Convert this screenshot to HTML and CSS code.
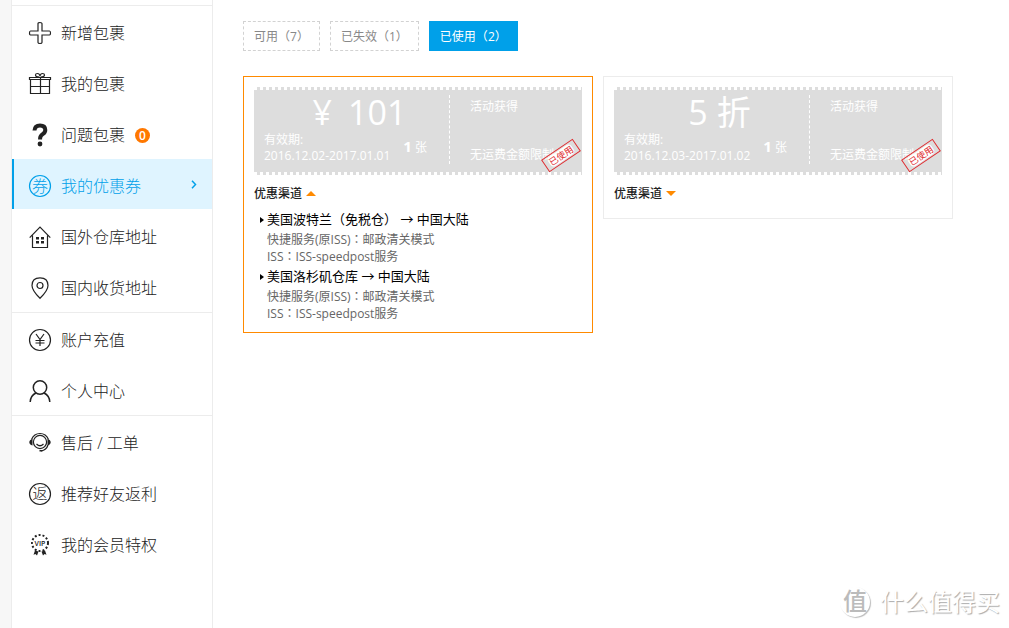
FILE: index.html
```html
<!DOCTYPE html>
<html lang="zh-CN">
<head>
<meta charset="utf-8">
<title>我的优惠券</title>
<link rel="stylesheet" href="styles.css">
</head>
<body>
<div class="page">
  <nav class="sidebar">
    <div class="group">
      <a class="item" href="#"><svg class="icon" viewBox="0 0 22 22"><path d="M9 1.500q0-1 2-1t2 1V9h7.500q1 0 1 2t-1 2H13v7.500q0 1-2 1t-2-1V13H1.500q-1 0-1-2t1-2H9z"/></svg><span>新增包裹</span></a>
      <a class="item" href="#"><svg class="icon" viewBox="0 0 22 22"><path d="M.5 4.500h21v2H.5zM1.500 6.500v14h19v-14M11.500 4.500v16M1.500 13.500h19M10.500 4q-4 0-4-2 0-1.500 2-1.500 2 0 2.500 2.500.5-2.500 2.500-2.500t2 1.500q0 2-4 2"/></svg><span>我的包裹</span></a>
      <a class="item" href="#"><svg class="icon" viewBox="0 0 22 22"><path class="thick" d="M5.500 6.500Q5.800 1.500 11 1.500t5.300 4.500q0 2.500-2.600 4.200T11.100 14.500v1"/><circle class="solid" cx="11" cy="20" r="2.400"/></svg><span>问题包裹</span><span class="badge">0</span></a>
      <a class="item active" href="#"><svg class="icon" viewBox="0 0 22 22"><circle cx="11" cy="11" r="10.500"/><text x="11" y="17" font-size="16">券</text></svg><span>我的优惠券</span><svg class="chevron" viewBox="0 0 6 9"><path d="M1 .8l3.500 3.700L1 8.200"/></svg></a>
      <a class="item" href="#"><svg class="icon" viewBox="0 0 22 22"><path d="M.7 11.700L11 1.200l10.300 10.500M3.500 9.500v12h15v-12"/><path class="solid" d="M7 11h3v2.500H7zM12 11h3v2.500h-3zM7 15h3v2.500H7zM12 15h3v2.500h-3z"/></svg><span>国外仓库地址</span></a>
      <a class="item" href="#"><svg class="icon" viewBox="0 0 22 22"><path d="M11 21.300Q3 13.500 3 8.500 3 .8 11 .8t8 7.700q0 5-8 12.800z"/><circle cx="11" cy="8.500" r="3"/></svg><span>国内收货地址</span></a>
    </div>
    <div class="group">
      <a class="item" href="#"><svg class="icon" viewBox="0 0 22 22"><circle cx="11" cy="11" r="10.500"/><path d="M7 5l4 5.500L15 5M11 10.500V17M6.500 11.500h9M6.500 14h9"/></svg><span>账户充值</span></a>
      <a class="item" href="#"><svg class="icon" viewBox="0 0 22 22"><g class="medium"><circle cx="11" cy="7.500" r="6.700"/><path d="M7 13Q1.500 15.500 1.200 22M15 13q5.500 2.500 5.800 9"/></g></svg><span>个人中心</span></a>
    </div>
    <div class="group">
      <a class="item" href="#"><svg class="icon" viewBox="0 0 22 22"><circle cx="11" cy="10" r="6.600"/><path d="M2.500 7.500Q5 1.500 11 1.500t8.500 6M19 13q-1.500 5-7 6M7.500 12q3.500 3.500 7 0"/><path class="solid" d="M3.500 7v6.500Q.3 12.500.3 10.200T3.500 7zM18.500 7v6.500q3.200-1 3.200-3.300T18.500 7zM10.500 18h3v1.500h-3z"/></svg><span>售后 / 工单</span></a>
      <a class="item" href="#"><svg class="icon" viewBox="0 0 22 22"><circle cx="11" cy="11" r="10.500"/><text x="11" y="16" font-size="15">返</text></svg><span>推荐好友返利</span></a>
      <a class="item" href="#"><svg class="icon" viewBox="0 0 22 22"><circle class="dotted" cx="11" cy="9" r="8"/><text class="vip" x="11" y="12" font-size="7">VIP</text><path class="solid" d="M6 16.500l3.500 1-1.500 4-1.500-1.500-2 .8zM16 16.500l-3.500 1 1.500 4 1.500-1.500 2 .8z"/></svg><span>我的会员特权</span></a>
    </div>
  </nav>

  <main class="content">
    <div class="tabs">
      <button class="tab" type="button">可用<span class="wide" lang="zh-TW">（</span>7<span class="wide" lang="zh-TW">）</span></button>
      <button class="tab" type="button">已失效<span class="wide" lang="zh-TW">（</span>1<span class="wide" lang="zh-TW">）</span></button>
      <button class="tab selected" type="button">已使用<span class="wide" lang="zh-TW">（</span>2<span class="wide" lang="zh-TW">）</span></button>
    </div>
    <div class="cards">
      <section class="card open">
        <div class="coupon">
          <div class="value">
            <div class="amount"><span class="yen">¥</span>101</div>
            <div class="terms">
              <div class="dates">有效期:<br>2016.12.02-2017.01.01</div>
              <div class="count"><b>1</b> 张</div>
            </div>
          </div>
          <div class="source"><span>活动获得</span><span>无运费金额限制</span></div>
          <span class="stamp"><span>已使用</span></span>
        </div>
        <button class="toggle" type="button" aria-expanded="true">优惠渠道</button>
        <dl class="routes">
          <dt>美国波特兰<span class="wide" lang="zh-TW">（</span>免税仓<span class="wide" lang="zh-TW">）</span> → 中国大陆</dt>
          <dd>快捷服务(原ISS)<span class="wide" lang="zh-TW">：</span>邮政清关模式</dd>
          <dd>ISS<span class="wide" lang="zh-TW">：</span>ISS-speedpost服务</dd>
          <dt>美国洛杉矶仓库 → 中国大陆</dt>
          <dd>快捷服务(原ISS)<span class="wide" lang="zh-TW">：</span>邮政清关模式</dd>
          <dd>ISS<span class="wide" lang="zh-TW">：</span>ISS-speedpost服务</dd>
        </dl>
      </section>
      <section class="card">
        <div class="coupon">
          <div class="value">
            <div class="amount">5 折</div>
            <div class="terms">
              <div class="dates">有效期:<br>2016.12.03-2017.01.02</div>
              <div class="count"><b>1</b> 张</div>
            </div>
          </div>
          <div class="source"><span>活动获得</span><span>无运费金额限制</span></div>
          <span class="stamp"><span>已使用</span></span>
        </div>
        <button class="toggle" type="button" aria-expanded="false">优惠渠道</button>
      </section>
    </div>
  </main>
  <div class="watermark"><span class="seal">值</span><span>什么值得买</span></div>
</div>
</body>
</html>
```
FILE: styles.css
```css
* {
  box-sizing: border-box;
}

body {
  margin: 0;
  background: #fff;
  color: #333;
  font: 12px/17px "Open Sans", "Noto Sans CJK SC", sans-serif;
}

button {
  font: inherit;
  cursor: pointer;
}

/* Full-width punctuation centred in its cell */
.wide {
  font-family: "Noto Sans CJK TC", sans-serif;
  line-height: 1;
}

.page {
  position: relative;
  display: flex;
  min-height: 100vh;
  border-left: 11px solid #f7f7f7;
}

/* Sidebar */
.sidebar {
  flex: none;
  width: 202px;
  padding-top: 5px;
  border: solid #ececec;
  border-width: 0 1px;
}

.group {
  border-top: 1px solid #ececec;
}

.item {
  display: flex;
  align-items: center;
  height: 50px;
  margin-bottom: 1px;
  padding: 4px 15px 0 17px;
  color: #222;
  font-size: 16px;
  font-weight: 300;
  line-height: 24px;
  text-decoration: none;
}

.item.active {
  padding-left: 15px;
  border-left: 2px solid #00a0e9;
  background: #dff4ff;
  color: #00a0e9;
}

.icon {
  flex: none;
  width: 22px;
  height: 22px;
  margin-right: 10px;
  overflow: visible;
  fill: none;
  stroke: currentColor;
  stroke-width: 1.2;
}

.icon text {
  fill: currentColor;
  stroke: none;
  text-anchor: middle;
}

.icon .vip {
  font-weight: 600;
}

.icon .thick {
  stroke-width: 4;
}

.icon .medium {
  stroke-width: 1.5;
}

.icon .solid {
  fill: currentColor;
  stroke: none;
}

.icon .dotted {
  stroke-width: 2;
  stroke-dasharray: 2 2;
}

.badge {
  width: 15px;
  height: 15px;
  margin-left: 10px;
  border-radius: 50%;
  background: #ff7800;
  color: #fff;
  font-size: 12px;
  font-weight: 600;
  line-height: 15px;
  text-align: center;
}

.chevron {
  width: 6px;
  height: 9px;
  margin: 0 0 4px auto;
  fill: none;
  stroke: currentColor;
  stroke-width: 1.5;
}

/* Main column */
.content {
  flex: 1;
  padding: 21px 30px;
}

.tabs,
.cards {
  display: flex;
  flex-wrap: wrap;
  align-items: flex-start;
  gap: 10px;
}

.tab {
  height: 30px;
  padding: 0 10px;
  border: 1px dashed #d2d2d2;
  background: #fff;
  color: #888;
}

.tab.selected {
  border: 1px solid #00a0e9;
  background: #00a0e9;
  color: #fff;
}

.cards {
  margin-top: 25px;
}

.card {
  width: 350px;
  padding: 10px 10px 16px;
  border: 1px solid #ececec;
}

.card.open {
  padding-bottom: 10px;
  border-color: #ff8a00;
}

/* Coupon ticket with perforated edges */
.coupon {
  position: relative;
  display: flex;
  padding: 8px 0 11px;
  background:
    repeating-linear-gradient(90deg, #fff 0 3px, #ddd 3px 6px) top / 100% 3px no-repeat,
    repeating-linear-gradient(90deg, #fff 0 3px, #ddd 3px 6px) bottom / 100% 3px no-repeat,
    #ddd;
  color: #fff;
}

.value {
  width: 196px;
  padding-left: 10px;
  border-right: 1px dashed #fff;
}

.amount {
  padding-left: 6px;
  font-size: 34px;
  line-height: 35px;
  text-align: center;
}

.yen {
  margin-right: 16px;
}

.terms {
  display: flex;
  align-items: center;
  gap: 13px;
  white-space: nowrap;
}

.dates {
  padding-top: 2px;
  line-height: 16px;
}

.count b {
  font-size: 15px;
}

.source {
  display: flex;
  flex-direction: column;
  justify-content: space-between;
  padding: 3px 0 1px 20px;
}

.stamp {
  position: absolute;
  right: 2px;
  bottom: 12px;
  width: 38px;
  height: 15px;
  padding: 1px 4px;
  border: 1px solid #e02c30;
  color: #e02c30;
  font-size: 9px;
  line-height: 11px;
  text-align: center;
  transform: rotate(-34deg);
}

.stamp span {
  display: block;
  border-radius: 4px;
  background: #fff;
}

/* Channel list */
.toggle {
  display: flex;
  align-items: center;
  gap: 4px;
  margin-top: 10px;
  padding: 0;
  border: 0;
  background: none;
  color: #222;
  font-weight: 500;
}

.toggle::after {
  content: "";
  border: solid transparent;
  border-width: 0 5px 5px;
  border-bottom-color: #ff8a00;
}

.toggle[aria-expanded="false"]::after {
  border-width: 5px 5px 0;
  border-top-color: #ff8a00;
}

.routes {
  margin: 6px 0 0;
  padding-left: 13px;
}

.routes dt {
  position: relative;
  color: #000;
  font-size: 13px;
  line-height: 23px;
}

.routes dt::before {
  content: "";
  position: absolute;
  top: 50%;
  left: -7px;
  margin-top: -3px;
  border: solid transparent;
  border-width: 3px 0 3px 4px;
  border-left-color: #000;
}

.routes dd {
  margin: 0;
  color: #666;
}

.watermark {
  position: absolute;
  right: 9px;
  bottom: 10px;
  display: flex;
  align-items: center;
  gap: 10px;
  color: #fff;
  font-size: 24px;
  line-height: 32px;
  text-shadow: 1px 1px 1px #aaa;
}

.seal {
  width: 30px;
  height: 30px;
  border-radius: 50%;
  box-shadow: 1px 1px 1px #bbb;
  color: #bbb;
  font-weight: 500;
  line-height: 28px;
  text-align: center;
  text-shadow: none;
}
```
